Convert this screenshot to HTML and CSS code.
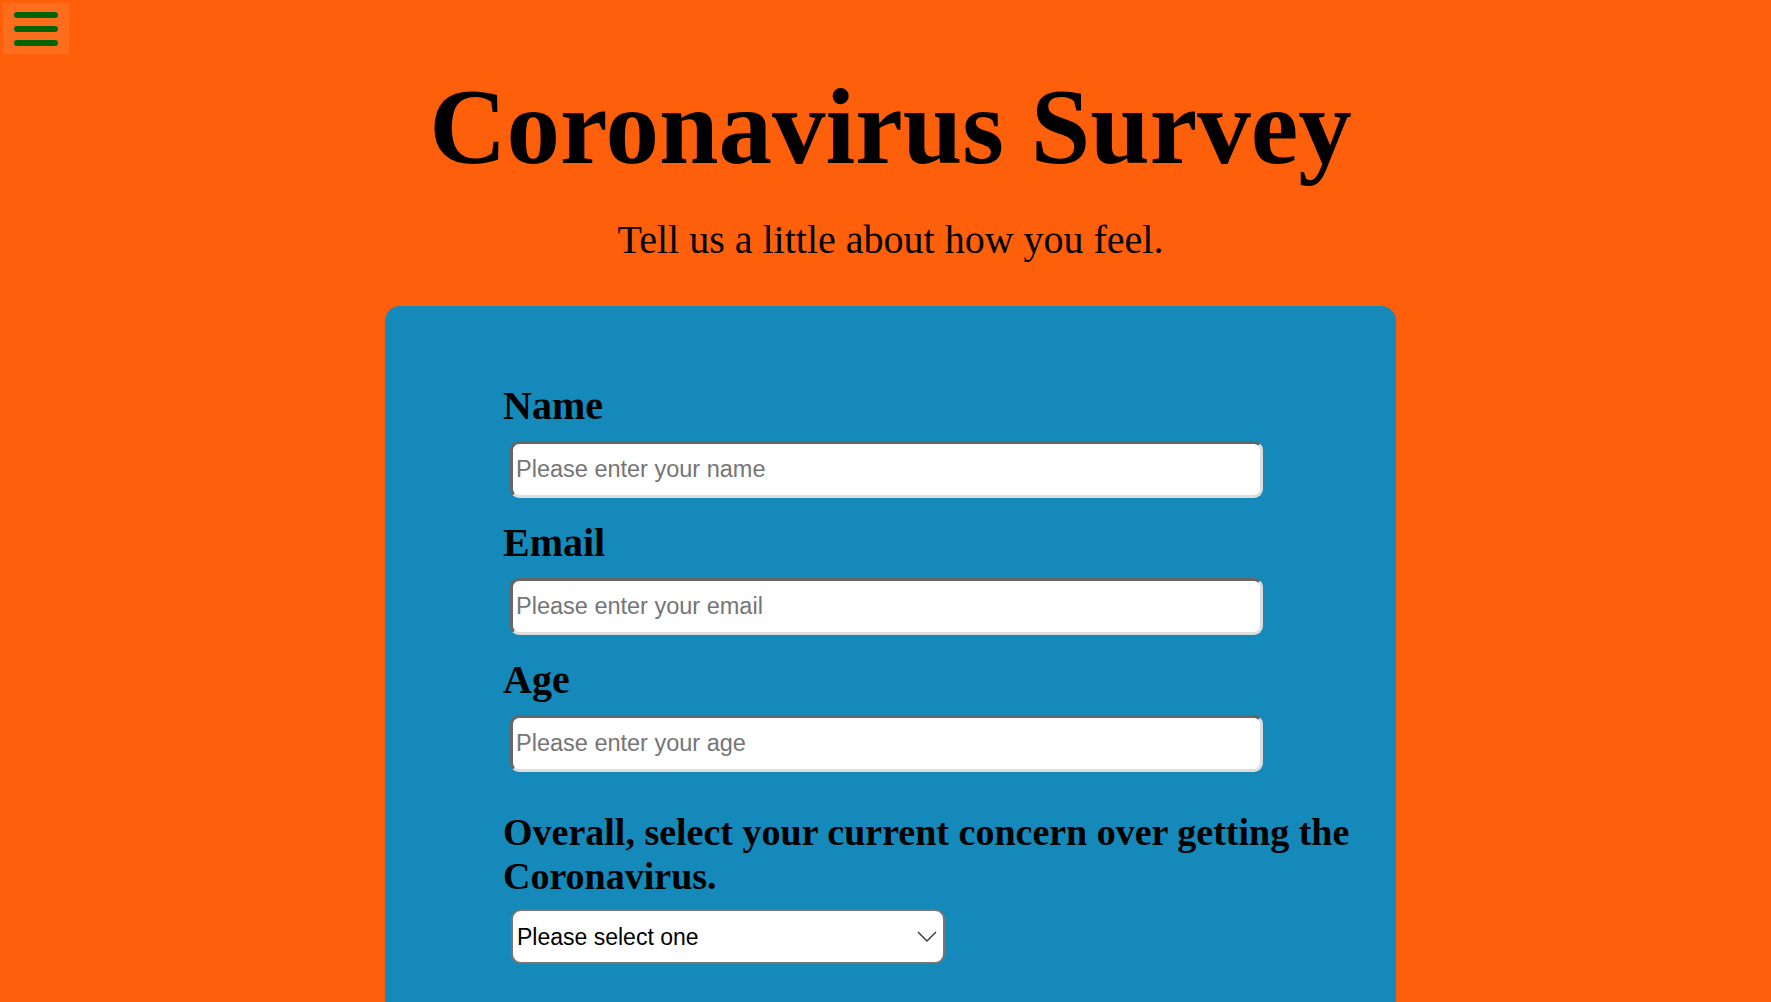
FILE: index.html
```html
<!DOCTYPE html>
<html lang="en">
<head>
<meta charset="utf-8">
<title>Coronavirus Survey</title>
<link rel="stylesheet" href="styles.css">
</head>
<body>
<button class="menu-btn" aria-label="Menu">
  <span class="bar"></span><span class="bar"></span><span class="bar"></span>
</button>
<header class="header">
  <h1 class="title">Coronavirus Survey</h1>
  <p class="subtitle">Tell us a little about how you feel.</p>
</header>
<main class="card">
  <form class="form">
    <label class="label" for="name">Name</label>
    <input class="field" id="name" type="text" placeholder="Please enter your name">
    <label class="label" for="email">Email</label>
    <input class="field" id="email" type="email" placeholder="Please enter your email">
    <label class="label" for="age">Age</label>
    <input class="field" id="age" type="number" placeholder="Please enter your age">
    <label class="label label-q" for="concern">Overall, select your current concern over getting the Coronavirus.</label>
    <div class="select-wrap">
      <select class="select" id="concern">
        <option>Please select one</option>
      </select>
      <svg class="chevron" viewBox="0 0 20 12" width="20" height="12"><path d="M1 1 L10 10 L19 1" fill="none" stroke="#333" stroke-width="1.4"/></svg>
    </div>
  </form>
</main>
</body>
</html>
```
FILE: styles.css
```css
html, body {
  margin: 0;
  padding: 0;
}
body {
  background: #fd5f0a;
  padding-left: 10px;
  font-family: "Liberation Serif", "Times New Roman", serif;
  color: #000;
  overflow: hidden;
  height: 1002px;
}
.menu-btn {
  position: absolute;
  left: 3px;
  top: 3px;
  width: 66px;
  height: 51px;
  background: #fd6d1e;
  border: none;
  padding: 0;
  display: flex;
  flex-direction: column;
  align-items: center;
  justify-content: center;
  gap: 8px;
}
.bar {
  display: block;
  width: 44px;
  height: 6px;
  border-radius: 3px;
  background: #006400;
}
.header {
  text-align: center;
  padding-top: 66px;
}
.title {
  margin: 0;
  font-size: 107px;
  line-height: 123px;
  font-weight: bold;
}
.subtitle {
  margin: 28px 0 0;
  font-size: 40px;
  line-height: 46px;
  font-weight: normal;
}
.card {
  width: 1011px;
  margin: 43px auto 0;
  background: #1589b9;
  border-radius: 15px;
  box-sizing: border-box;
  padding: 78px 16px 120px 118px;
}
.form {
  display: flex;
  flex-direction: column;
  align-items: flex-start;
}
.label {
  font-size: 40px;
  line-height: 44px;
  font-weight: bold;
  margin-bottom: 13px;
}
.field {
  margin: 0 0 23px 7px;
  width: 753px;
  height: 57px;
  box-sizing: border-box;
  border-style: solid;
  border-width: 3px;
  border-color: #666 #ddd #ddd #666;
  border-radius: 9px;
  background: #fff;
  padding: 0 3px;
  font-family: Arial, "Liberation Sans", sans-serif;
  font-size: 23.5px;
  color: #000;
  outline: none;
}
.field::placeholder {
  color: #757575;
}
.label-q {
  font-size: 38px;
  line-height: 44px;
  margin-top: 15px;
  margin-bottom: 11px;
}
.select-wrap {
  position: relative;
  margin-left: 8px;
}
.select {
  appearance: none;
  -webkit-appearance: none;
  width: 434px;
  height: 55px;
  box-sizing: border-box;
  border: 2px solid #767676;
  border-radius: 10px;
  background: #fff;
  padding: 0 4px;
  font-family: Arial, "Liberation Sans", sans-serif;
  font-size: 23px;
  color: #000;
}
.chevron {
  position: absolute;
  right: 8px;
  top: 22px;
  pointer-events: none;
}
```
